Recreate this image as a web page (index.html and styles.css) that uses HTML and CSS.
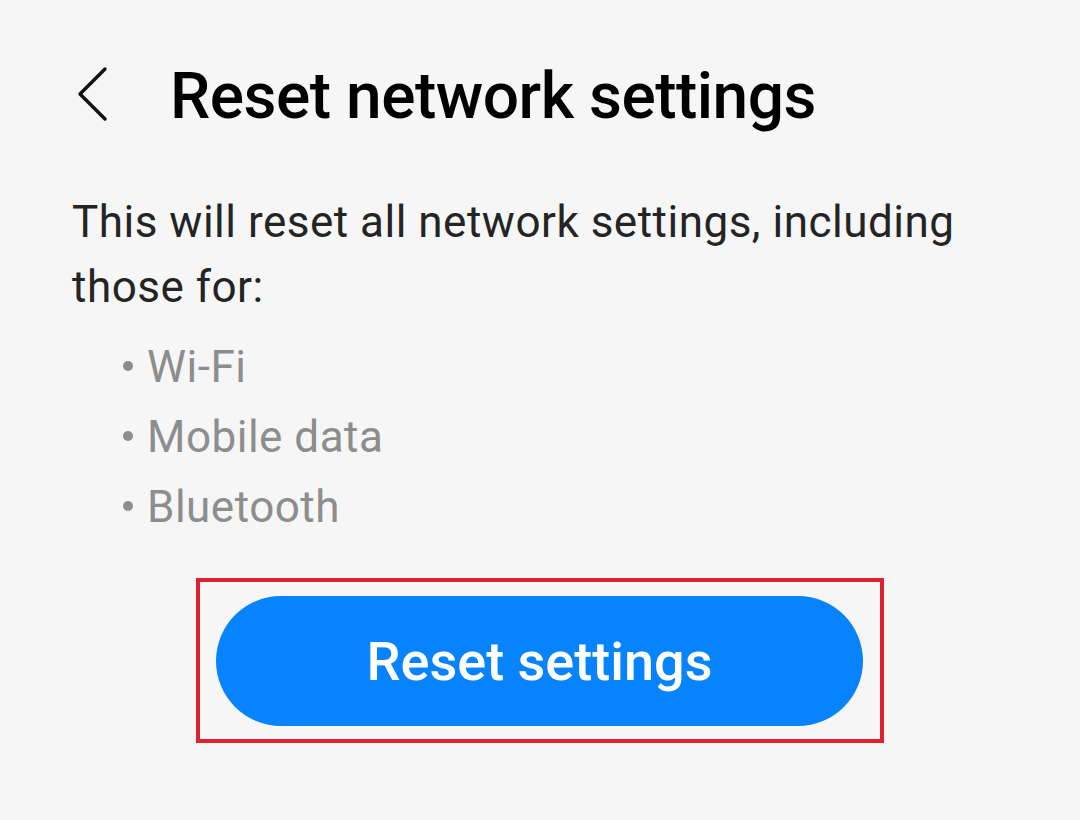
FILE: index.html
```html
<!DOCTYPE html>
<html lang="en">
<head>
<meta charset="utf-8">
<title>Reset network settings</title>
<link rel="stylesheet" href="styles.css">
</head>
<body>
<div class="screen">
  <header class="topbar">
    <button class="back" aria-label="Back">
      <svg width="32" height="58" viewBox="0 0 32 58"><path d="M29 4 L4 29 L29 54" fill="none" stroke="#111" stroke-width="3.4" stroke-linecap="round" stroke-linejoin="round"/></svg>
    </button>
    <h1 class="title">Reset network settings</h1>
  </header>
  <p class="desc">This will reset all network settings, including those for:</p>
  <ul class="items">
    <li>Wi-Fi</li>
    <li>Mobile data</li>
    <li>Bluetooth</li>
  </ul>
  <div class="action">
    <div class="highlight">
      <button class="reset">Reset settings</button>
    </div>
  </div>
</div>
</body>
</html>
```
FILE: styles.css
```css
html, body {
  margin: 0;
  padding: 0;
  background: #f6f6f6;
}
body {
  font-family: Roboto, "Noto Sans", sans-serif;
  width: 1080px;
  height: 820px;
  overflow: hidden;
}
.screen {
  padding: 59px 72px 0 72px;
}
.topbar {
  display: flex;
  align-items: flex-start;
  height: 76px;
}
.back {
  background: none;
  border: 0;
  padding: 0;
  margin: 6px 0 0 4px;
  width: 32px;
  height: 58px;
  display: flex;
}
.title {
  margin: 0 0 0 62px;
  font-size: 64px;
  line-height: 76px;
  font-weight: 500;
  color: #000;
  letter-spacing: -0.5px;
  white-space: nowrap;
}
.desc {
  margin: 55px 0 0 0;
  font-size: 44px;
  line-height: 65px;
  letter-spacing: 0.5px;
  color: #242424;
}
.items {
  list-style: none;
  margin: 12px 0 0 0;
  padding: 0 0 0 51px;
  font-size: 44px;
  line-height: 70px;
  letter-spacing: 0.5px;
  color: #8d8d8d;
}
.items li::before {
  content: "";
  display: inline-block;
  width: 10px;
  height: 10px;
  border-radius: 50%;
  background: #8d8d8d;
  margin-right: 14px;
  vertical-align: 11px;
}
.action {
  display: flex;
  justify-content: center;
  margin-top: 36px;
}
.highlight {
  border: 4px solid #e0212f;
  padding: 14px 17px 13px 16px;
}
.reset {
  display: block;
  width: 647px;
  height: 130px;
  border: 0;
  border-radius: 65px;
  background: #0683fd;
  color: #fff;
  font-family: Roboto, sans-serif;
  font-size: 54px;
  font-weight: 500;
  padding: 0;
}
```
